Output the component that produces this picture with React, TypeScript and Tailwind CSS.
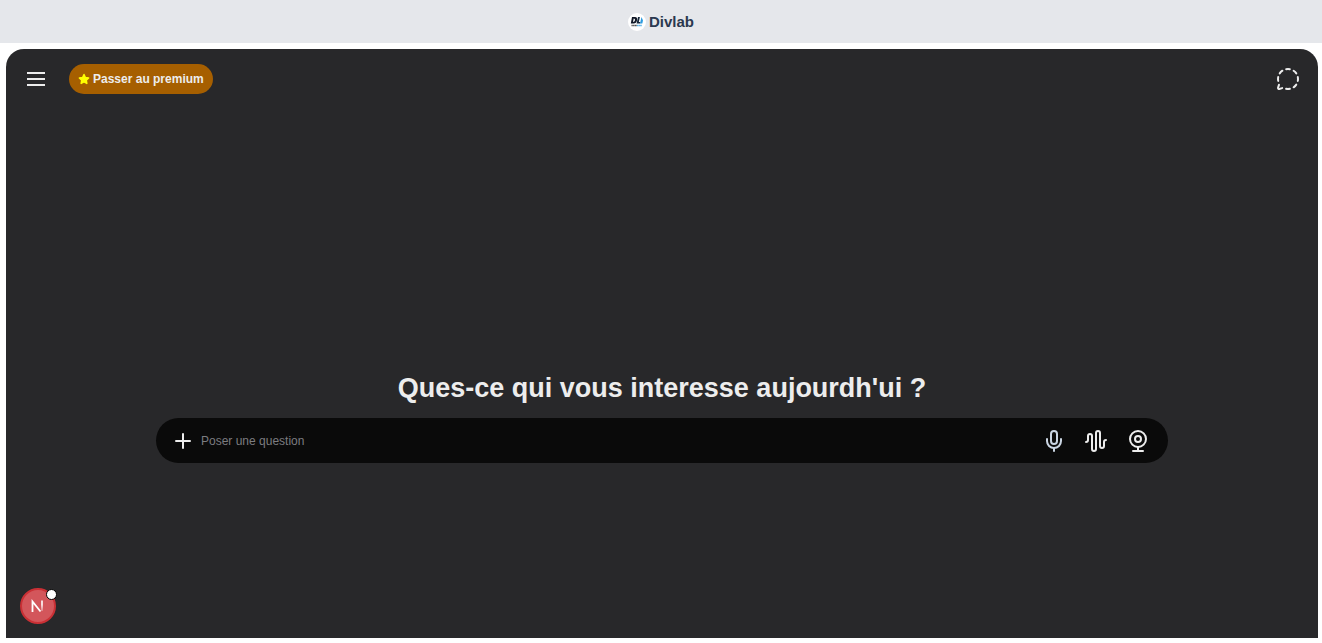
import React from 'react'
import { AudioWaveform, MessageCircleDashed, Mic, Plus, Webcam } from 'lucide-react'

const Logo: React.FC = () => (
  <svg viewBox="0 0 18 18" className="size-[18px]" aria-hidden="true">
    <circle cx="9" cy="9" r="9" fill="#fff" />
    <path d="M4 4h3q2.600 0 2 3.200T5.600 10.500H2.800zM5.700 5.500 5 9q1.700 0 2-1.800T5.700 5.500z" fill="#111827" fillRule="evenodd" />
    <path d="M10 4h1.900l-1.100 4.900h1.700l-.4 1.600H8.600z" fill="#16293d" />
    <path d="m13.500 4-1.500 6.500h2.300L15 7.500z" fill="#2b9be0" />
    <path d="M3.500 12.500H9" stroke="#555" strokeWidth="1.500" strokeDasharray="1.300 .3" />
    <path d="M9 12.500h5" stroke="#54aee6" strokeWidth="1.500" strokeDasharray="1.300 .3" />
  </svg>
)

const App: React.FC = () => {
  return (
    <div className="flex h-screen flex-col bg-white pb-[5px] font-['Liberation_Sans',Arial,sans-serif]">
      <header className="flex h-[43px] shrink-0 items-center justify-center gap-[3px] bg-gray-200">
        <Logo />
        <span className="text-[15px] font-semibold leading-5 text-[#2b3950]">Divlab</span>
      </header>

      <main className="relative mt-1.5 mr-1 ml-1.5 flex flex-1 flex-col rounded-t-[18px] bg-[#28282a]">
        {/* Top bar */}
        <div className="flex h-[60px] items-center justify-between px-[18px]">
          <div className="flex items-center gap-[21px]">
            <button aria-label="Menu" className="text-[#ededed]">
              <svg viewBox="0 0 24 24" className="size-6" stroke="currentColor" strokeWidth="2">
                <path d="M3 6h18M3 12h18M3 18h18" />
              </svg>
            </button>
            <button className="flex h-[30px] items-center gap-[3px] rounded-full bg-[#a65f00] px-[9px] text-xs font-semibold text-[#ededed]">
              <svg viewBox="0 0 24 24" className="size-3" fill="#ff0" stroke="#ff0" strokeWidth="3" strokeLinejoin="round">
                <path d="m12 3 2.800 6 6.500.8-4.800 4.500 1.200 6.500L12 17.600l-5.700 3.200 1.200-6.500-4.800-4.500 6.500-.8z" />
              </svg>
              Passer au premium
            </button>
          </div>
          <button aria-label="Discussion temporaire" className="text-[#ededed]">
            <MessageCircleDashed size={24} />
          </button>
        </div>

        {/* Prompt */}
        <div className="flex flex-1 flex-col items-center justify-center px-[150px] pt-[86px]">
          <h1 className="mb-3 text-[27px] font-bold leading-9 text-[#ededed]">
            Ques-ce qui vous interesse aujourdh'ui ?
          </h1>
          <form className="flex h-[45px] w-full items-center rounded-full bg-[#0a0a0a] pr-[18px] pl-[15px] text-[#ededed]">
            <button type="button" aria-label="Ajouter">
              <Plus size={24} />
            </button>
            <input
              type="text"
              aria-label="Poser une question"
              placeholder="Poser une question"
              className="ml-1.5 min-w-0 flex-1 bg-transparent text-xs outline-none placeholder:text-[#7c7c80]"
            />
            <div className="flex items-center gap-[18px]">
              <button type="button" aria-label="Dicter" className="text-slate-300">
                <Mic size={24} />
              </button>
              <button type="button" aria-label="Mode vocal">
                <AudioWaveform size={24} />
              </button>
              <button type="button" aria-label="Webcam">
                <Webcam size={24} />
              </button>
            </div>
          </form>
        </div>

        {/* Dev tools badge */}
        <button aria-label="Next.js" className="absolute bottom-3.5 left-3.5 flex size-9 items-center justify-center rounded-full border-2 border-[#ca3035] bg-[#d3565b]">
          <svg viewBox="0 0 14 14" className="size-3.5" fill="none">
            <defs>
              <linearGradient id="stem" x1="0" y1="0" x2="0" y2="1">
                <stop offset="0.4" stopColor="#fff" />
                <stop offset="1" stopColor="#fff" stopOpacity="0.3" />
              </linearGradient>
            </defs>
            <path d="M1.500 13V2.500L9.500 12.500" stroke="#fff" strokeWidth="1.800" />
            <path d="M10.200 1.500h1.600v10.500h-1.600z" fill="url(#stem)" />
          </svg>
          <span className="absolute -top-px -right-[3px] size-[11px] rounded-full border border-black bg-white" />
        </button>
      </main>
    </div>
  )
}

export default App
